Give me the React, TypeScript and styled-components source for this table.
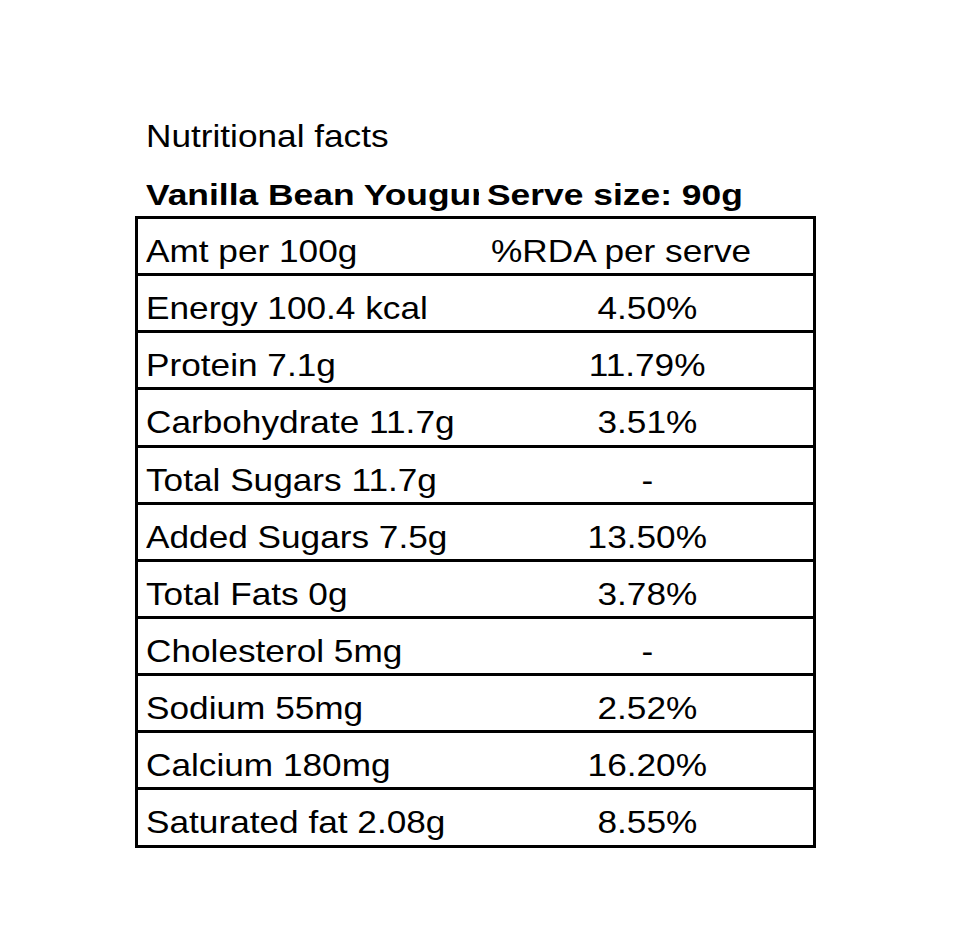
import React from "react";
import styled, { createGlobalStyle } from "styled-components";

const rows: [string, string, boolean?][] = [
	["Energy 100.4 kcal", "4.50%"],
	["Protein 7.1g", "11.79%"],
	["Carbohydrate 11.7g", "3.51%", true],
	["Total Sugars 11.7g", "-"],
	["Added Sugars 7.5g", "13.50%"],
	["Total Fats 0g", "3.78%"],
	["Cholesterol 5mg", "-"],
	["Sodium 55mg", "2.52%"],
	["Calcium 180mg", "16.20%"],
	["Saturated fat 2.08g", "8.55%", true],
];

const App = () => {
	return (
		<>
			<GlobalStyle />
			<Page>
				<Title>
					<Text>Nutritional facts</Text>
				</Title>
				<Subtitle>
					<SubCell>
						<BoldText>Vanilla Bean Yougurt</BoldText>
					</SubCell>
					<SubCell $first={false}>
						<BoldText>Serve size: 90g</BoldText>
					</SubCell>
				</Subtitle>
				<Table>
					<Row>
						<Cell>
							<Text>Amt per 100g</Text>
						</Cell>
						<Cell $align="left">
							<Text>%RDA per serve</Text>
						</Cell>
					</Row>
					{rows.map(([label, value, tall]) => (
						<Row key={label} $tall={tall}>
							<Cell>
								<Text>{label}</Text>
							</Cell>
							<Cell $align="center">
								<Text $center>{value}</Text>
							</Cell>
						</Row>
					))}
				</Table>
			</Page>
		</>
	);
};

const GlobalStyle = createGlobalStyle`
	body {
		margin: 0;
		background: #ffffff;
		color: #000000;
		font-family: "Liberation Sans", Arial, sans-serif;
	}
`;

const Page = styled.div`
	padding: 119px 0 0 135px;
	font-size: 32px;
	line-height: 34px;
`;

const Text = styled.span<{ $center?: boolean }>`
	display: inline-block;
	white-space: nowrap;
	transform: scaleX(1.1);
	transform-origin: ${(p) => (p.$center ? "center" : "left")};
`;

const BoldText = styled.span`
	display: inline-block;
	white-space: nowrap;
	font-size: 30px;
	font-weight: bold;
	transform: scaleX(1.18);
	transform-origin: left;
`;

const Title = styled.div`
	padding-left: 11px;
	height: 34px;
`;

const Subtitle = styled.div`
	display: grid;
	grid-template-columns: 344px 1fr;
	width: 681px;
	height: 34px;
	margin: 24px 0 5px;
`;

const SubCell = styled.div<{ $first?: boolean }>`
	overflow: hidden;
	padding-left: ${(p) => (p.$first === false ? "8px" : "11px")};
`;

const Table = styled.div`
	width: 681px;
	box-sizing: border-box;
	border: 3px solid #000;
	border-bottom: none;
`;

const Row = styled.div<{ $tall?: boolean }>`
	display: grid;
	grid-template-columns: 350px 1fr;
	height: ${(p) => (p.$tall ? "55px" : "54px")};
	border-bottom: 3px solid #000;
`;

const Cell = styled.div<{ $align?: "left" | "center" }>`
	overflow: hidden;
	padding-top: 15px;
	padding-left: ${(p) => (p.$align === "left" ? "3px" : p.$align ? "0" : "8px")};
	padding-right: ${(p) => (p.$align === "center" ? "7px" : "0")};
	text-align: ${(p) => (p.$align === "center" ? "center" : "left")};
`;

export default App;
